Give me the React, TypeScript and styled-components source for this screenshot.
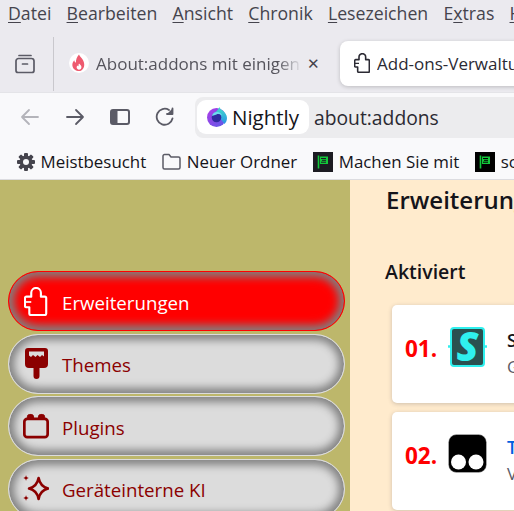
import React from "react";
import styled, { createGlobalStyle } from "styled-components";

const GlobalStyle = createGlobalStyle`
  html, body {
    margin: 0;
    padding: 0;
    width: 514px;
    height: 511px;
    overflow: hidden;
  }
  #root {
    width: 514px;
    height: 511px;
  }
`;

const Window = styled.div`
  width: 514px;
  height: 511px;
  display: flex;
  flex-direction: column;
  overflow: hidden;
  font-family: "Open Sans", "Noto Sans", sans-serif;
`;

/* ---- browser chrome ---- */

const MenuBar = styled.div`
  height: 28px;
  flex: none;
  display: flex;
  align-items: center;
  gap: 15.2px;
  padding: 0 0 2px 8px;
  box-sizing: border-box;
  background: #ebeaef;
  color: #45444d;
  font-size: 17.7px;
  white-space: nowrap;
  span u {
    text-underline-offset: 2px;
    text-decoration-thickness: 1px;
  }
`;

const TabBar = styled.div`
  height: 64px;
  flex: none;
  display: flex;
  align-items: center;
  background: #ebeaef;
`;

const ViewButton = styled.div`
  width: 54px;
  height: 54px;
  margin-top: 8px;
  flex: none;
  display: flex;
  align-items: center;
  justify-content: center;
  padding-right: 4px;
  box-sizing: border-box;
  border-right: 1px solid #c9c8cd;
  color: #5b5b66;
`;

const Tab = styled.div<{ $active?: boolean }>`
  flex: none;
  height: 45px;
  margin-top: 6px;
  display: flex;
  align-items: center;
  box-sizing: border-box;
  font-size: 17px;
  white-space: nowrap;
  overflow: hidden;
  color: ${(p) => (p.$active ? "#2b2a33" : "#55545c")};
  width: ${(p) => (p.$active ? "190px" : "271px")};
  margin-left: ${(p) => (p.$active ? "15px" : "0")};
  padding-left: ${(p) => (p.$active ? "14px" : "15px")};
  background: ${(p) => (p.$active ? "#fff" : "transparent")};
  border-radius: ${(p) => (p.$active ? "8px 0 0 8px" : "0")};
  box-shadow: ${(p) => (p.$active ? "0 1px 4px rgba(0,0,0,.2)" : "none")};
`;

const TabTitle = styled.span<{ $faded?: boolean }>`
  margin-left: 7px;
  width: ${(p) => (p.$faded ? "206px" : "auto")};
  overflow: hidden;
  flex: none;
  ${(p) =>
    p.$faded &&
    `mask-image: linear-gradient(to right, #000 88%, transparent 100%);`}
`;

const TabClose = styled.span`
  margin-left: 5px;
  font-size: 15px;
  line-height: 1;
  color: #45444d;
  display: flex;
`;

const NavBar = styled.div`
  height: 52px;
  flex: none;
  display: flex;
  align-items: center;
  padding: 0 0 3px 20px;
  background: #f9f9fb;
  border-top: 1px solid #e4e4e8;
  box-sizing: border-box;
`;

const NavIcon = styled.div<{ $muted?: boolean }>`
  width: 45px;
  flex: none;
  display: flex;
  color: ${(p) => (p.$muted ? "#b4b4ba" : "#5b5b66")};
`;

const UrlBar = styled.div`
  flex: 1;
  height: 41px;
  margin-left: -5px;
  display: flex;
  align-items: center;
  padding-left: 2px;
  background: #ececee;
  border-radius: 8px 0 0 8px;
  font-size: 20.5px;
  color: #2b2a33;
  white-space: nowrap;
`;

const Identity = styled.div`
  height: 34px;
  width: 112px;
  flex: none;
  display: flex;
  align-items: center;
  gap: 5px;
  padding-left: 10px;
  box-sizing: border-box;
  background: #fff;
  border-radius: 9px;
  color: #15141a;
`;

const UrlText = styled.span`
  margin-left: 5px;
  font-size: 19.3px;
`;

const BookmarkBar = styled.div`
  height: 36px;
  flex: none;
  display: flex;
  align-items: center;
  padding-left: 17px;
  gap: 16px;
  background: #f9f9fb;
  border-bottom: 1px solid #dcdce0;
  box-sizing: border-box;
  font-size: 16.9px;
  color: #15141a;
  white-space: nowrap;
`;

const Bookmark = styled.div`
  display: flex;
  align-items: center;
  gap: 5.5px;
  flex: none;
`;

/* ---- page ---- */

const Page = styled.div`
  flex: 1;
  display: flex;
  min-height: 0;
`;

const Sidebar = styled.nav`
  width: 350px;
  flex: none;
  box-sizing: border-box;
  padding: 91px 0 0 8px;
  display: flex;
  flex-direction: column;
  gap: 2.5px;
  background: #bdb76b;
`;

const Category = styled.div<{ $selected?: boolean }>`
  width: 337px;
  height: 60px;
  flex: none;
  box-sizing: border-box;
  display: flex;
  align-items: center;
  gap: 13px;
  padding-left: 14px;
  border-radius: 30px;
  font-size: 18.7px;
  color: ${(p) => (p.$selected ? "#fff" : "#8b0000")};
  background: ${(p) => (p.$selected ? "#ff0000" : "#dcdcdc")};
  border: 1px solid ${(p) => (p.$selected ? "#ff0000" : "#dcdcdc")};
  box-shadow: inset 0 0 8px 5px #808080;
`;

const CategoryIcon = styled.div`
  width: 26px;
  height: 30px;
  flex: none;
  display: flex;
  align-items: center;
  justify-content: center;
`;

const CategoryLabel = styled.span`
  margin-top: 2px;
`;

const Main = styled.main`
  flex: 1;
  min-width: 0;
  padding: 3px 0 0 36px;
  background: #ffebcd;
  overflow: hidden;
`;

const Heading = styled.h1`
  margin: 0;
  font-size: 24px;
  line-height: 34px;
  font-weight: 600;
  color: #15141a;
  white-space: nowrap;
`;

const SubHeading = styled.h2`
  margin: 41px 0 0 -1px;
  font-size: 19.5px;
  line-height: 28px;
  font-weight: 600;
  color: #15141a;
`;

const CardList = styled.div`
  margin: 19px 0 0 6px;
  display: flex;
  flex-direction: column;
  gap: 9px;
`;

const Card = styled.div`
  width: 200px;
  height: 98px;
  flex: none;
  box-sizing: border-box;
  padding: 22px 0 0 13px;
  display: flex;
  background: #fff;
  border-radius: 5px;
  box-shadow: 0 1px 4px rgba(58, 57, 68, 0.25);
`;

const Rank = styled.div`
  width: 43px;
  flex: none;
  margin-top: 7px;
  font-size: 22.5px;
  line-height: 30px;
  font-weight: 700;
  color: #ff0000;
`;

const AddonIcon = styled.div`
  width: 40px;
  height: 40px;
  flex: none;
`;

const AddonText = styled.div`
  margin-left: 19px;
  white-space: nowrap;
`;

const AddonName = styled.div<{ $link?: boolean }>`
  font-size: 18px;
  line-height: 26px;
  font-weight: 600;
  color: ${(p) => (p.$link ? "#0060df" : "#15141a")};
`;

const AddonDesc = styled.div`
  font-size: 17px;
  line-height: 28px;
  color: #5b5b66;
`;

/* ---- drawings ---- */

const FixedSvg = styled.svg`
  flex: none;
`;

const ArchiveIcon = () => (
  <svg width="22" height="22" viewBox="0 0 22 22" fill="none" stroke="currentColor" strokeWidth="1.7">
    <path d="M5 2.5h12" strokeLinecap="round" />
    <path d="M2 8a2.5 2.5 0 0 1 2.5-2.5h13A2.5 2.5 0 0 1 20 8v9.5a2 2 0 0 1-2 2H4a2 2 0 0 1-2-2z" />
    <path d="M8.5 11h5" strokeLinecap="round" />
  </svg>
);

const FlameIcon = () => (
  <FixedSvg width="20" height="20" viewBox="0 0 21 21">
    <circle cx="10.5" cy="10.5" r="10.5" fill="#fff" />
    <path
      d="M10.5 1.5c1 3 5.5 5 5.5 10.5 0 4-2.5 7-5.5 7S3.5 16.5 3.5 12.5c0-2.5 1-3.5 2-5 .3 1.5 1 2.3 1.8 2.5C7 7 8.5 4 10.5 1.5z"
      fill="#ee5a6f"
    />
    <path d="M10.5 11c1.5 1.5 3 2.5 2.5 4.5-.4 1.5-1.500 2-2.500 2s-2.500-.8-2.500-2.500c0-1 .6-1.500 1-2 .2.500.5.800 1 .8-.2-1 .1-2 .5-2.800z" fill="#fff" />
  </FixedSvg>
);

// Firefox's add-on piece: wide knob on top, square block out on the left,
// body stepping back in below the block, small tick cut into the block
const PuzzlePath =
  "M7.500 10V6a5 5 0 0 1 10 0v4h4a1.500 1.500 0 0 1 1.500 1.500V27.500a1.500 1.500 0 0 1-1.500 1.500H7a1.500 1.500 0 0 1-1.500-1.500V21H2.500A1.500 1.500 0 0 1 1 19.500v-8A1.500 1.500 0 0 1 2.500 10z";

const Puzzle = ({ height = 29, weight = 2.2 }: { height?: number; weight?: number }) => (
  <FixedSvg width={(height * 24) / 30} height={height} viewBox="0 0 24 30" fill="none" stroke="currentColor" strokeWidth={weight} strokeLinejoin="round">
    <path d={PuzzlePath} />
    <path d="M1 15.500h6.500" strokeWidth={weight * 0.8} />
  </FixedSvg>
);

const BrushIcon = () => (
  <svg width="23" height="31" viewBox="0 0 23 31">
    <path d="M3 0h17a3 3 0 0 1 3 3v13a4 4 0 0 1-4 4h-4.500v8a3 3 0 0 1-6 0v-8H4a4 4 0 0 1-4-4V3a3 3 0 0 1 3-3z" fill="currentColor" />
    <path d="M4 3.500h15v5l-2-1.500-2 2-2.500-2-2 2-2.500-2-2 2-2-1.500z" fill="#dcdcdc" />
  </svg>
);

const PluginIcon = () => (
  <svg width="27" height="26" viewBox="0 0 27 26" fill="none" stroke="currentColor" strokeWidth="2.800">
    <rect x="1.400" y="5.500" width="24.200" height="19" rx="3" />
    <path d="M4.500 5V3.500A2.500 2.500 0 0 1 7 1h1.500A2.500 2.500 0 0 1 11 3.500V5zM16 5V3.500A2.500 2.500 0 0 1 18.500 1H20a2.500 2.500 0 0 1 2.500 2.500V5z" fill="currentColor" strokeWidth="1" />
  </svg>
);

const SparkleIcon = () => (
  <svg width="30" height="31" viewBox="0 0 30 31" fill="none" stroke="currentColor">
    <path d="M18 3.500c1.300 7 4.500 10.500 11 12-6.500 1.500-9.700 5-11 12-1.300-7-4.500-10.500-11-12 6.500-1.500 9.700-5 11-12z" strokeWidth="3" strokeLinejoin="round" />
    <path d="M3.500 0c.4 2.200 1 2.900 3.200 3.400-2.200.5-2.800 1.200-3.200 3.400C3.100 4.600 2.500 3.900.3 3.400 2.500 2.900 3.100 2.200 3.500 0zM3.500 23c.4 2.200 1 2.900 3.200 3.400-2.200.5-2.800 1.200-3.200 3.400-.4-2.200-1-2.900-3.200-3.400 2.200-.5 2.800-1.200 3.200-3.400z" fill="currentColor" stroke="none" />
  </svg>
);

const BackArrow = () => (
  <svg width="20" height="20" viewBox="0 0 20 20" fill="none" stroke="currentColor" strokeWidth="1.800" strokeLinecap="round" strokeLinejoin="round">
    <path d="M18 10H2M9 3l-7 7 7 7" />
  </svg>
);

const ForwardArrow = () => (
  <svg width="20" height="20" viewBox="0 0 20 20" fill="none" stroke="currentColor" strokeWidth="1.800" strokeLinecap="round" strokeLinejoin="round">
    <path d="M2 10h16M11 3l7 7-7 7" />
  </svg>
);

const SidebarIcon = () => (
  <svg width="20" height="16" viewBox="0 0 20 16">
    <rect x="1" y="1" width="18" height="14" rx="2" fill="none" stroke="currentColor" strokeWidth="2" />
    <rect x="1" y="1" width="6.500" height="14" rx="1.500" fill="currentColor" />
  </svg>
);

const ReloadIcon = () => (
  <svg width="20" height="20" viewBox="0 0 20 20" fill="none" stroke="currentColor" strokeWidth="1.800" strokeLinecap="round" strokeLinejoin="round">
    <path d="M17.500 11.500A8 8 0 1 1 14 3" />
    <path d="M17.500 1.500v5.500h-5.500" fill="currentColor" />
  </svg>
);

const NightlyLogo = () => (
  <FixedSvg width="20" height="20" viewBox="0 0 20 20">
    <defs>
      <linearGradient id="nightlyGlobe" x1="0" y1="0" x2="1" y2="1">
        <stop offset="0" stopColor="#b03be8" />
        <stop offset="1" stopColor="#5a5be6" />
      </linearGradient>
      <linearGradient id="nightlyFlame" x1="0.5" y1="0" x2="0.5" y2="1">
        <stop offset="0" stopColor="#3fe0c8" />
        <stop offset="1" stopColor="#2a8fe8" />
      </linearGradient>
    </defs>
    <circle cx="9.500" cy="10.500" r="9.500" fill="url(#nightlyGlobe)" />
    <path d="M12.500 0c.5 2 1.500 2.500 3 3.500 2.500 2 4.500 4.500 4.500 7.500 0 2.500-1 4.500-2.500 6L12 10 7 6c1.500-1 4-2.500 5.500-6z" fill="url(#nightlyFlame)" />
    <circle cx="9.500" cy="10.500" r="4.800" fill="#2f2aa0" />
    <path d="M5 9c.5-3 3-4.500 6-4 2 .4 3.500 1.800 4 3.500-2-1.500-4-1.800-5.500-1z" fill="#6fd8ee" />
  </FixedSvg>
);

const GearIcon = () => (
  <FixedSvg width="18" height="18" viewBox="0 0 18 18">
    <g fill="#45444d">
      {[0, 45, 90, 135].map((a) => (
        <rect key={a} x="7" y="0" width="4" height="18" rx="1" transform={`rotate(${a} 9 9)`} />
      ))}
      <circle cx="9" cy="9" r="6.500" />
    </g>
    <circle cx="9" cy="9" r="3" fill="#f9f9fb" />
  </FixedSvg>
);

const FolderIcon = () => (
  <FixedSvg width="19" height="17" viewBox="0 0 19 17" fill="none" stroke="#5b5b66" strokeWidth="1.500" strokeLinejoin="round">
    <path d="M1 3a1.500 1.500 0 0 1 1.500-1.500h4.500l2 2.500h7.500A1.500 1.500 0 0 1 18 5.500v9a1.500 1.500 0 0 1-1.500 1.500h-14A1.500 1.500 0 0 1 1 14.500z" />
  </FixedSvg>
);

const GreenFlag = ({ tone }: { tone: string }) => (
  <FixedSvg width="20" height="20" viewBox="0 0 20 20">
    <rect width="20" height="20" fill={tone} />
    <path d="M5.500 3.500v13" stroke="#12c83a" strokeWidth="1.600" />
    <rect x="7" y="4.500" width="8" height="7.500" fill="#12c83a" />
    <path d="M8 6.500h5M9 8.300h4M8 10.200h5" stroke={tone} strokeWidth="1" />
  </FixedSvg>
);

const StylusLogo = () => (
  <svg width="40" height="40" viewBox="0 0 40 40">
    <rect x="3" y="1" width="33" height="38" rx="3" fill="#2a5050" stroke="#2ff0ee" strokeWidth="2" />
    <path d="M0 19.500h3M36 19.500h3" stroke="#2ff0ee" strokeWidth="2.500" />
    <text x="19.500" y="34" textAnchor="middle" fontFamily="Open Sans, sans-serif" fontStyle="italic" fontWeight="800" fontSize="40" fill="#2ff0ee">
      S
    </text>
  </svg>
);

const TampermonkeyLogo = () => (
  <svg width="40" height="40" viewBox="0 0 40 40">
    <rect width="38" height="38" x="0.500" y="0.500" rx="8" fill="#000" stroke="#ccc" strokeWidth="0.500" />
    <circle cx="10.500" cy="28" r="7.500" fill="#fff" />
    <circle cx="28" cy="28" r="7.500" fill="#fff" />
  </svg>
);

const menuItems: [string, string, string][] = [
  ["", "D", "atei"],
  ["", "B", "earbeiten"],
  ["", "A", "nsicht"],
  ["", "C", "hronik"],
  ["", "L", "esezeichen"],
  ["E", "x", "tras"],
  ["", "H", "ilfe"],
];

const App = () => (
  <Window>
    <GlobalStyle />
    <MenuBar>
      {menuItems.map(([before, key, after]) => (
        <span key={key}>
          {before}
          <u>{key}</u>
          {after}
        </span>
      ))}
    </MenuBar>

    <TabBar>
      <ViewButton>
        <ArchiveIcon />
      </ViewButton>
      <Tab>
        <FlameIcon />
        <TabTitle $faded>About:addons mit einigen</TabTitle>
        <TabClose>✕</TabClose>
      </Tab>
      <Tab $active>
        <Puzzle height={20} weight={2.4} />
        <TabTitle>Add-ons-Verwaltung</TabTitle>
      </Tab>
    </TabBar>

    <NavBar>
      <NavIcon $muted>
        <BackArrow />
      </NavIcon>
      <NavIcon>
        <ForwardArrow />
      </NavIcon>
      <NavIcon>
        <SidebarIcon />
      </NavIcon>
      <NavIcon>
        <ReloadIcon />
      </NavIcon>
      <UrlBar>
        <Identity>
          <NightlyLogo />
          Nightly
        </Identity>
        <UrlText>about:addons</UrlText>
      </UrlBar>
    </NavBar>

    <BookmarkBar>
      <Bookmark>
        <GearIcon />
        Meistbesucht
      </Bookmark>
      <Bookmark>
        <FolderIcon />
        Neuer Ordner
      </Bookmark>
      <Bookmark>
        <GreenFlag tone="#1c1b22" />
        Machen Sie mit
      </Bookmark>
      <Bookmark>
        <GreenFlag tone="#000" />
        sc
      </Bookmark>
    </BookmarkBar>

    <Page>
      <Sidebar>
        <Category $selected>
          <CategoryIcon>
            <Puzzle />
          </CategoryIcon>
          <CategoryLabel>Erweiterungen</CategoryLabel>
        </Category>
        <Category>
          <CategoryIcon>
            <BrushIcon />
          </CategoryIcon>
          <CategoryLabel>Themes</CategoryLabel>
        </Category>
        <Category>
          <CategoryIcon>
            <PluginIcon />
          </CategoryIcon>
          <CategoryLabel>Plugins</CategoryLabel>
        </Category>
        <Category>
          <CategoryIcon>
            <SparkleIcon />
          </CategoryIcon>
          <CategoryLabel>Geräteinterne KI</CategoryLabel>
        </Category>
      </Sidebar>
      <Main>
        <Heading>Erweiterungen</Heading>
        <SubHeading>Aktiviert</SubHeading>
        <CardList>
          <Card>
            <Rank>01.</Rank>
            <AddonIcon>
              <StylusLogo />
            </AddonIcon>
            <AddonText>
              <AddonName>Stylus</AddonName>
              <AddonDesc>Gestalten</AddonDesc>
            </AddonText>
          </Card>
          <Card>
            <Rank>02.</Rank>
            <AddonIcon>
              <TampermonkeyLogo />
            </AddonIcon>
            <AddonText>
              <AddonName $link>Tampermonkey</AddonName>
              <AddonDesc>Verwaltet</AddonDesc>
            </AddonText>
          </Card>
        </CardList>
      </Main>
    </Page>
  </Window>
);

export default App;
